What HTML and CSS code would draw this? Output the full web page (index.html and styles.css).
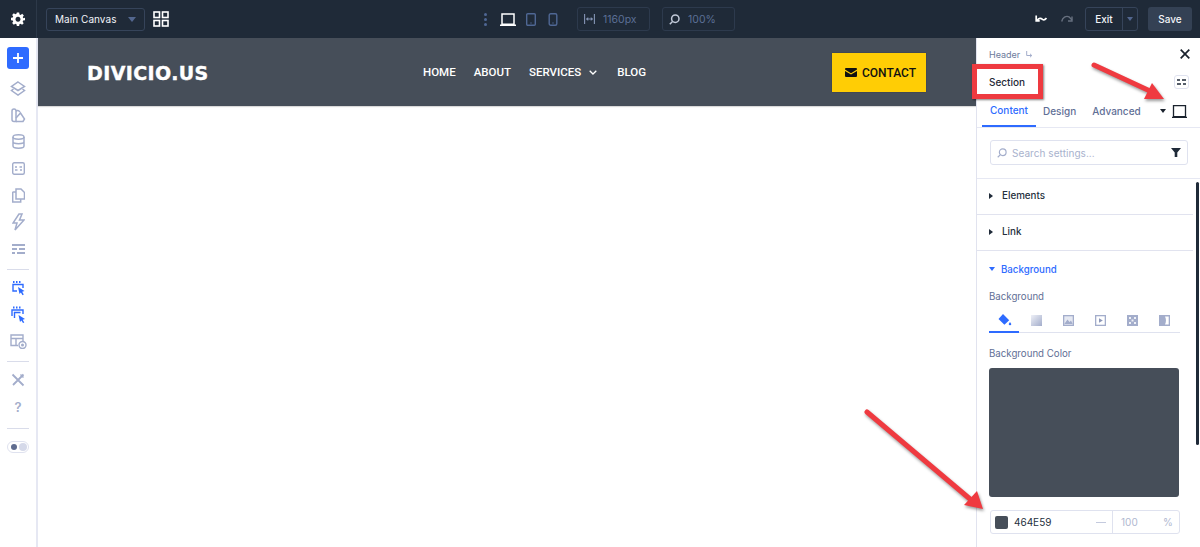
FILE: index.html
```html
<!DOCTYPE html>
<html lang="en">
<head>
<meta charset="utf-8">
<title>Section settings</title>
<link rel="stylesheet" href="styles.css">
</head>
<body>
<div class="app">
  <header class="topbar">
    <div class="gear-cell">
      <svg width="14" height="14" viewBox="0 0 24 24"><path fill="#fff" fill-rule="evenodd" d="M10 1h4l.6 3.2 1.9.8 2.7-1.8 2.8 2.8-1.8 2.7.8 1.9L24 10v4l-3.2.6-.8 1.9 1.800 2.700-2.800 2.800-2.700-1.800-1.900.8L14 24h-4l-.6-3.200-1.900-.8-2.700 1.800L2 19l1.800-2.700-.8-1.900L0 14v-4l3-.6.8-1.900L2 5l2.800-2.800 2.700 1.800 1.900-.8zM12 8a4.300 4.300 0 1 0 .01 0z"/></svg>
    </div>
    <div class="select">
      <span>Main Canvas</span>
      <span class="caret"></span>
    </div>
    <svg class="grid-icon" width="16" height="16" viewBox="0 0 16 16" fill="none" stroke="#fff" stroke-width="1.600"><rect x="1" y="1" width="5.500" height="5.500"/><rect x="9.500" y="1" width="5.500" height="5.500"/><rect x="1" y="9.500" width="5.500" height="5.500"/><rect x="9.500" y="9.500" width="5.500" height="5.500"/></svg>
    <div class="dots"><i></i><i></i><i></i></div>
    <svg class="laptop" width="16" height="13" viewBox="0 0 16 13" fill="none" stroke="#fff" stroke-width="1.500"><path d="M2 1h12v10.200H2zM0 12.200h16"/></svg>
    <svg class="tablet" width="10" height="13" viewBox="0 0 10 13" fill="none" stroke="#4f6794" stroke-width="1.400"><rect x=".7" y=".7" width="8.600" height="11.600" rx="1"/><path d="M5 9.500v1"/></svg>
    <svg class="phone" width="10" height="13" viewBox="0 0 10 13" fill="none" stroke="#4f6794" stroke-width="1.400"><rect x="1.200" y=".7" width="7.600" height="11.600" rx="1.500"/><path d="M5 9.500v1"/></svg>
    <div class="tool-input width-input">
      <svg width="11" height="10" viewBox="0 0 11 10" fill="none" stroke="#8494b4" stroke-width="1.100"><path d="M.6 0v10M10.400 0v10M2.500 5h6"/><path fill="#8494b4" stroke="none" d="M2 5l2.200-2v4zM9 5L6.800 3v4z"/></svg>
      <span>1160px</span>
    </div>
    <div class="tool-input zoom-input">
      <svg width="11" height="11" viewBox="0 0 11 11" fill="none" stroke="#c2cad9" stroke-width="1.500"><circle cx="6.300" cy="4.700" r="3.700"/><path d="M3.500 7.500L.8 10.200"/></svg>
      <span>100%</span>
    </div>
    <svg class="undo" width="12" height="8" viewBox="0 0 12 8" fill="none" stroke="#fff" stroke-width="1.700"><path d="M1.200 .5v5.300h3.500"/><path d="M2 5.500c2-3 4-2.500 5.500-1.200 1.300 1 2.500 .6 4-1.300"/></svg>
    <svg class="redo" width="12" height="8" viewBox="0 0 12 8" fill="none" stroke="#67707f" stroke-width="1.400"><path d="M.7 6.500C1.500 2.500 5 .5 8 1.800L11 5"/><path d="M11 1.500v4.500H7"/></svg>
    <div class="exit-group">
      <span class="exit-label">Exit</span>
      <span class="exit-caret"><i class="caret small"></i></span>
    </div>
    <button class="save">Save</button>
  </header>

  <div class="main">
    <nav class="sidebar">
      <div class="add-btn">
        <svg width="10" height="10" viewBox="0 0 10 10" stroke="#fff" stroke-width="1.800"><path d="M5 0v10M0 5h10"/></svg>
      </div>
      <div class="side-icon first">
        <svg width="16" height="15" viewBox="0 0 16 15" fill="none" stroke="#a3adcb" stroke-width="1.500"><path d="M8 1l6.500 4.500L8 9.500 1.500 5.500z"/><path d="M3.500 8L1.500 9.500 8 14l6.500-4.500L12.500 8"/></svg>
      </div>
      <div class="side-icon">
        <svg width="15" height="15" viewBox="0 0 15 15" fill="none" stroke="#a3adcb" stroke-width="1.500"><path d="M1 3a2 2 0 0 1 4 0v10.500H3a2 2 0 0 1-2-2zM5 3.500a2 2 0 0 1 3-.5l1 1"/><path d="M5 13.500h7l1.500-2.500L9.500 5 5 10"/></svg>
      </div>
      <div class="side-icon">
        <svg width="13" height="15" viewBox="0 0 13 15" fill="none" stroke="#a3adcb" stroke-width="1.500"><ellipse cx="6.500" cy="3" rx="5.500" ry="2.200"/><path d="M1 3v9c0 1.200 2.500 2.200 5.500 2.200S12 13.200 12 12V3M1 7.500c0 1.200 2.500 2.200 5.500 2.200S12 8.700 12 7.500"/></svg>
      </div>
      <div class="side-icon">
        <svg width="13" height="13" viewBox="0 0 13 13" fill="none" stroke="#a3adcb" stroke-width="1.400"><rect x=".7" y=".7" width="11.600" height="11.600" rx="1.500"/><path d="M3 5h2M7.500 5h2.500M3 8h2.500M8 8h2"/></svg>
      </div>
      <div class="side-icon">
        <svg width="13" height="15" viewBox="0 0 13 15" fill="none" stroke="#a3adcb" stroke-width="1.500"><path d="M4 3.500V1h5l3.500 3.500V11H4zM4 4H1.500a.8.800 0 0 0-.8.800V14h8v-3"/></svg>
      </div>
      <div class="side-icon">
        <svg width="13" height="18" viewBox="0 0 13 18" fill="none" stroke="#a3adcb" stroke-width="1.500"><path d="M7 1L1 10h4l-2 7 9-10H7.500L10 1z"/></svg>
      </div>
      <div class="side-icon">
        <svg width="13" height="10" viewBox="0 0 13 10" stroke="#a3adcb" stroke-width="1.800"><path d="M0 1h13M0 5h5M7 5h6M0 9h3M5 9h8"/></svg>
      </div>
      <hr class="side-rule">
      <div class="side-icon">
        <svg width="13" height="16" viewBox="0 0 13 16" fill="none" stroke="#2e6bff" stroke-width="1.400"><path d="M1 2h1.500M4 2h1.500M7 2h1.500" stroke-width="2"/><path d="M5 11H1V4.500h10V8"/><path fill="#2e6bff" stroke="none" d="M6 7l6.500 4-2.300.8 1.600 2.800-1.300.7-1.600-2.800L7.500 14z"/></svg>
      </div>
      <div class="side-icon">
        <svg width="15" height="17" viewBox="0 0 15 17" fill="none" stroke="#2e6bff" stroke-width="1.400"><path d="M2 1.500h1.500M5 1.500h1.500M8 1.500h1.500" stroke-width="2"/><path d="M1 10V4h11v4M3.500 12V6.500h6"/><path fill="#2e6bff" stroke="none" d="M7.500 9l6.500 4-2.300.8 1.600 2.800-1.300.4-1.600-2.500L9 16z"/></svg>
      </div>
      <div class="side-icon">
        <svg width="17" height="15" viewBox="0 0 17 15" fill="none" stroke="#a3adcb" stroke-width="1.400"><path d="M8 11.500H1V1h12v6M1 4.500h12M6 4.500v7"/><circle cx="12.500" cy="11" r="3.500"/><circle cx="12.500" cy="11" r=".8" fill="#a3adcb"/></svg>
      </div>
      <hr class="side-rule">
      <div class="side-icon">
        <svg width="14" height="14" viewBox="0 0 14 14" fill="none" stroke="#a3adcb" stroke-width="1.800"><path d="M1.500 1.500L12.500 12.500M12.500 1.500L2 12"/><path d="M9.500 1.500l3 3" stroke-width="1.500"/></svg>
      </div>
      <div class="side-icon help">?</div>
      <hr class="side-rule wide-gap">
      <div class="toggle">
        <span class="toggle-on"></span>
        <span class="toggle-off"></span>
      </div>
    </nav>

    <section class="canvas">
      <div class="site-header">
        <div class="logo">DIVICIO.US</div>
        <ul class="site-nav">
          <li>HOME</li>
          <li>ABOUT</li>
          <li class="has-sub">SERVICES
            <svg width="8" height="5" viewBox="0 0 8 5" fill="none" stroke="#fff" stroke-width="1.300"><path d="M.7.700L4 4l3.300-3.300"/></svg>
          </li>
          <li>BLOG</li>
        </ul>
        <div class="contact">
          <svg width="12" height="9" viewBox="0 0 12 9"><path fill="#111" d="M1 0h10a1 1 0 0 1 1 1v.6L6 5.300 0 1.600V1a1 1 0 0 1 1-1zM0 2.900l6 3.700 6-3.700V8a1 1 0 0 1-1 1H1a1 1 0 0 1-1-1z"/></svg>
          <span>CONTACT</span>
        </div>
      </div>
    </section>

    <aside class="panel">
      <div class="panel-head">
        <div class="crumb-row">
          <span class="crumb">Header</span>
          <svg width="7" height="7" viewBox="0 0 7 7" fill="none" stroke="#a3adcb"><path d="M.7 0v4.500h5M4 2.800l1.800 1.700L4 6.200"/></svg>
          <svg class="close" width="10" height="10" viewBox="0 0 10 10" stroke="#1a222d" stroke-width="1.700"><path d="M.7.700l8.600 8.600M9.300.700L.7 9.300"/></svg>
        </div>
        <div class="title-row">
          <span class="title">Section</span>
          <span class="mini-btn">
            <svg width="9" height="6" viewBox="0 0 9 6" stroke="#1f2a38" stroke-width="1.400"><path d="M0 1h3M5 1h4M0 5h4M6 5h3"/></svg>
          </span>
        </div>
        <div class="tabs">
          <span class="tab active">Content</span>
          <span class="tab">Design</span>
          <span class="tab">Advanced</span>
          <span class="tab-caret"></span>
          <svg class="tab-laptop" width="15" height="13" viewBox="0 0 15 13" fill="none" stroke="#1a222d" stroke-width="1.300"><path d="M1.500.7h12v11h-12zM0 12.300h15"/></svg>
        </div>
      </div>
      <div class="search-wrap">
        <div class="search">
          <svg width="10" height="10" viewBox="0 0 11 11" fill="none" stroke="#a3adcb" stroke-width="1.300"><circle cx="6.300" cy="4.700" r="3.700"/><path d="M3.500 7.500L.8 10.200"/></svg>
          <span class="placeholder">Search settings...</span>
          <svg class="filter" width="10" height="9" viewBox="0 0 10 9"><path fill="#1f2a38" d="M0 0h10L6.300 4.500V9H3.700V4.500z"/></svg>
        </div>
      </div>
      <div class="panel-body">
        <div class="group">
          <i class="tri-right"></i><span>Elements</span>
        </div>
        <div class="group">
          <i class="tri-right"></i><span>Link</span>
        </div>
        <div class="open-group">
          <div class="open-title"><i class="tri-down"></i><span>Background</span></div>
          <div class="field-label">Background</div>
          <div class="bg-tabs">
            <span class="bg-tab active">
              <svg width="15" height="13" viewBox="0 0 15 13"><path fill="#2e6bff" d="M6 1l6.200 6.200-4.800 4.500L1.500 6zM13 9l1.300 2a1.300 1.300 0 1 1-2.600 0z"/></svg>
            </span>
            <span class="bg-tab">
              <span class="grad-swatch"></span>
            </span>
            <span class="bg-tab">
              <svg width="11" height="11" viewBox="0 0 11 11"><rect width="11" height="11" fill="#a3adcb"/><rect x="1.300" y="1.300" width="8.400" height="8.400" fill="#e6e9f2"/><path fill="#a3adcb" d="M1.300 9L4.500 4.500 6.500 7 8 5.500 9.700 9z"/></svg>
            </span>
            <span class="bg-tab">
              <svg width="11" height="11" viewBox="0 0 11 11"><rect width="11" height="11" fill="#a3adcb"/><rect x="1.300" y="1.300" width="8.400" height="8.400" fill="#fff"/><path fill="#8c97b8" d="M4 3.300l3.800 2.200L4 7.700z"/></svg>
            </span>
            <span class="bg-tab">
              <svg width="11" height="11" viewBox="0 0 11 11"><rect width="11" height="11" fill="#a3adcb"/><path fill="#eef0f6" d="M2 2h2v2H2zM7 2h2v2H7zM4.500 4.500h2v2h-2zM2 7h2v2H2zM7 7h2v2H7z"/></svg>
            </span>
            <span class="bg-tab">
              <svg width="11" height="11" viewBox="0 0 11 11"><rect width="11" height="11" fill="#a3adcb"/><path fill="#fff" d="M6 1.500h3.700v8H6c1.300-2.500 1.300-5.500 0-8z"/></svg>
            </span>
          </div>
          <div class="field-label color-label">Background Color</div>
          <div class="preview"></div>
          <div class="color-input">
            <span class="swatch"></span>
            <span class="hex">464E59</span>
            <span class="dash"></span>
            <span class="opacity">100</span>
            <span class="percent">%</span>
          </div>
        </div>
      </div>
      <div class="scrollbar"></div>
    </aside>
  </div>

  <div class="section-mark"></div>
  <svg class="arrows" width="1200" height="547" viewBox="0 0 1200 547">
    <g class="arrow-shadow">
      <path class="arrow-line" d="M1094 65L1150 91"/>
      <path class="arrow-head" d="M1164 99L1144 99L1152 83z"/>
      <path class="arrow-line" d="M867 412L970 499"/>
      <path class="arrow-head" d="M983 509L964 505L977 491z"/>
    </g>
  </svg>
</div>
</body>
</html>
```
FILE: styles.css
```css
* { box-sizing: border-box; }
html, body { margin: 0; padding: 0; }
body { font-family: Inter, "Liberation Sans", sans-serif; background: #fff; }
.app { position: relative; width: 1200px; height: 547px; overflow: hidden; display: flex; flex-direction: column; }

/* top bar */
.topbar { height: 38px; flex: none; display: flex; align-items: center; background: #1f2a38; color: #fff; font-size: 11px; }
.gear-cell { width: 37px; height: 38px; display: flex; align-items: center; justify-content: center; border-right: 1px solid #2d3949; }
.select { width: 99px; height: 23px; margin-left: 9px; padding: 0 8px; display: flex; align-items: center; justify-content: space-between; border: 1px solid #36445a; border-radius: 3px; color: #f2f4f8; font-size: 10px; letter-spacing: .05px; }
.caret { width: 0; height: 0; border-left: 4px solid transparent; border-right: 4px solid transparent; border-top: 5px solid #53678f; }
.caret.small { display: block; border-left-width: 3px; border-right-width: 3px; border-top-width: 4px; }
.grid-icon { margin-left: 8px; }
.dots { margin-left: 315px; display: flex; flex-direction: column; gap: 2px; }
.dots i { display: block; width: 3px; height: 3px; border-radius: 50%; background: #4f6794; }
.laptop { margin-left: 13px; }
.tablet { margin-left: 10px; }
.phone { margin-left: 12px; }
.tool-input { width: 73px; height: 24px; padding-left: 6px; display: flex; align-items: center; gap: 8px; border: 1px solid #2d3a4d; border-radius: 3px; color: #5b6f95; font-size: 10.500px; }
.width-input { margin-left: 19px; }
.zoom-input { margin-left: 12px; }
.undo { margin-left: 300px; }
.redo { margin-left: 14px; }
.exit-group { margin-left: 12px; width: 53px; height: 24px; display: flex; border: 1px solid #36445a; border-radius: 3px; }
.exit-label { flex: 1; display: flex; align-items: center; justify-content: center; font-size: 10px; font-weight: 500; color: #f2f4f8; }
.exit-caret { width: 15px; display: flex; align-items: center; justify-content: center; border-left: 1px solid #36445a; }
.save { margin-left: 10px; width: 44px; height: 24px; padding: 0; border: 0; border-radius: 3px; background: #344154; color: #f2f4f8; font: 500 10px Inter, "Liberation Sans", sans-serif; }

.main { flex: 1; min-height: 0; display: flex; }

/* sidebar */
.sidebar { width: 38px; flex: none; padding-top: 9px; display: flex; flex-direction: column; align-items: center; background: #fff; border-right: 2px solid #e6e8f3; }
.add-btn { width: 22px; height: 22px; flex: none; display: flex; align-items: center; justify-content: center; border-radius: 3px; background: #2e6bff; }
.side-icon { width: 100%; height: 26.800px; flex: none; display: flex; align-items: center; justify-content: center; }
.side-icon.first { margin-top: 6px; }
.help { color: #a3adcb; font-size: 13px; font-weight: 600; }
.side-rule { width: 22px; height: 1px; margin: 6px 0 5px; border: 0; background: #d9dcea; flex: none; }
.side-rule.wide-gap { margin-top: 7px; }
.toggle { width: 22px; height: 12px; margin-top: 7px; padding: 0 1px 0 3px; flex: none; display: flex; align-items: center; justify-content: space-between; border: 1px solid #dfe2ef; border-radius: 7px; }
.toggle-on { width: 6px; height: 6px; border-radius: 50%; background: #5f6c8f; }
.toggle-off { width: 8px; height: 8px; border-radius: 50%; background: #d5d9e9; }

/* canvas */
.canvas { flex: 1; min-width: 0; background: #fff; }
.site-header { height: 68px; display: flex; align-items: center; padding: 0 50px 0 49px; background: #464e59; box-shadow: 0 1px 1px rgba(0,0,0,.15); }
.logo { width: 122px; margin-top: 1px; color: #fff; font: 700 19px "DejaVu Sans", sans-serif; letter-spacing: .4px; line-height: 14px; white-space: nowrap; -webkit-text-stroke: .4px #fff; }
.site-nav { list-style: none; display: flex; gap: 18px; margin: 0 0 0 214px; padding: 0; color: #fff; font: 500 11.500px Roboto, "Liberation Sans", sans-serif; }
.has-sub { display: flex; align-items: center; gap: 8px; margin-right: 2px; }
.contact { margin-left: auto; width: 94px; height: 39px; display: flex; align-items: center; padding-left: 13px; gap: 5px; background: #ffcd05; color: #111; font: 500 12px Roboto, "Liberation Sans", sans-serif; box-shadow: 0 0 1px rgba(0,0,0,.4); }
.contact span { margin-top: 1px; }

/* panel */
.panel { position: relative; width: 224px; flex: none; display: flex; flex-direction: column; border-left: 1px solid #e1e3ef; background: #fff; }
.panel-head { padding: 9px 0 0 12px; border-bottom: 1px solid #e6e8f3; height: 90px; }
.crumb-row { height: 14px; display: flex; align-items: center; gap: 6px; color: #6d7b9c; font-size: 9px; }
.close { margin-left: auto; margin-right: 10px; }
.title-row { height: 30px; margin-top: 6px; display: flex; align-items: center; }
.title { margin-left: 0; font-size: 10px; font-weight: 500; color: #1f2a38; }
.mini-btn { margin-left: auto; margin-right: 11px; width: 15px; height: 14px; display: flex; align-items: center; justify-content: center; border: 1px solid #dfe2ef; border-radius: 3px; }
.tabs { height: 32px; margin: -2px 0 0 -7px; display: flex; align-items: center; font-size: 10px; font-weight: 500; color: #5f6f96; }
.tab { height: 32px; display: flex; align-items: center; padding: 0 7px; }
.tab.active { width: 54px; padding-left: 8px; color: #2e6bff; border-bottom: 2px solid #2e6bff; }
.tab:nth-child(3) { margin-left: 2px; }
.tab-caret { margin-left: 12px; width: 0; height: 0; border-left: 3px solid transparent; border-right: 3px solid transparent; border-top: 4px solid #1a222d; }
.tab-laptop { margin-left: 6px; }
.search-wrap { height: 51px; padding: 12px 12px 0 13px; border-bottom: 1px solid #e6e8f3; }
.search { height: 25px; padding: 0 6px; display: flex; align-items: center; gap: 5px; border: 1px solid #dfe2ef; border-radius: 3px; }
.placeholder { color: #a9b2cd; font-size: 10px; letter-spacing: .05px; }
.filter { margin-left: auto; }
.panel-body { flex: 1; min-height: 0; width: 216px; }
.group { height: 36px; padding: 0 0 2px 12px; display: flex; align-items: center; gap: 9px; border-bottom: 1px solid #e1e3ef; color: #252f3d; font-size: 9.800px; font-weight: 500; }
.tri-right { width: 0; height: 0; border-top: 3px solid transparent; border-bottom: 3px solid transparent; border-left: 4px solid #1f2a38; }
.tri-down { width: 0; height: 0; border-left: 3.500px solid transparent; border-right: 3.500px solid transparent; border-top: 4px solid #2e6bff; }
.open-group { padding-left: 12px; }
.open-title { height: 36px; display: flex; align-items: center; gap: 6px; color: #2e6bff; font-size: 9.700px; font-weight: 500; }
.field-label { height: 14px; line-height: 14px; margin-top: 3px; color: #5f6f96; font-size: 9.700px; }
.bg-tabs { width: 191px; height: 24px; margin-top: 5px; display: flex; border-bottom: 1px solid #dfe2ef; }
.bg-tab { width: 32px; height: 24px; padding-bottom: 1px; display: flex; align-items: center; justify-content: center; }
.bg-tab.active { width: 30px; border-bottom: 2px solid #2e6bff; margin-right: 1px; }
.grad-swatch { width: 11px; height: 11px; background: linear-gradient(135deg, #eef0f7, #a3adcb); }
.color-label { margin-top: 14px; }
.preview { width: 190px; height: 129px; margin-top: 7px; border-radius: 3px; background: #464e59; }
.color-input { width: 190px; height: 24px; margin: 13px 0 0 1px; padding-left: 4px; display: flex; align-items: center; border: 1px solid #dfe2ef; border-radius: 3px; font-size: 10px; }
.swatch { width: 13px; height: 13px; flex: none; border-radius: 2px; background: #464e59; }
.hex { margin-left: 6px; width: 82px; color: #252f3d; }
.dash { width: 10px; height: 1px; background: #c4cade; }
.opacity { margin-left: 6px; height: 22px; line-height: 22px; padding-left: 8px; width: 40px; border-left: 1px solid #dfe2ef; color: #b0b8d0; }
.percent { margin-left: 11px; color: #b0b8d0; }
.scrollbar { position: absolute; top: 144px; right: 1px; width: 3px; height: 263px; border-radius: 2px; background: #1f2a38; }

/* annotations */
.section-mark { position: absolute; left: 972px; top: 64px; width: 71px; height: 35px; border: 5px solid #ee3a40; box-shadow: 1px 1px 2px rgba(0,0,0,.5); }
.arrows { position: absolute; left: 0; top: 0; pointer-events: none; }
.arrow-shadow { filter: drop-shadow(1px 2px 1.500px rgba(0,0,0,.4)); }
.arrow-line { stroke: #ef3a40; stroke-width: 5; stroke-linecap: round; fill: none; }
.arrow-head { fill: #ef3a40; }
```
